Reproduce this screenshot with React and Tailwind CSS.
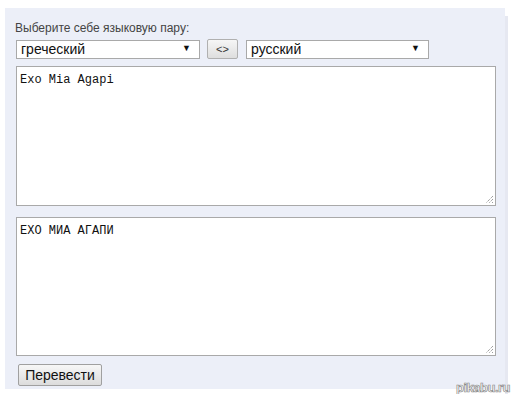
export default function App() {
  const font = { fontFamily: '"Liberation Sans", Arial, sans-serif' };
  const mono = { fontFamily: '"Liberation Mono", "DejaVu Sans Mono", monospace' };
  const Grip = () => (
    <svg className="absolute right-[1px] bottom-[1px]" width="10" height="10" viewBox="0 0 10 10">
      <path d="M9 2 L2 9 M9 5 L5 9 M9 8 L8 9" stroke="#777" strokeWidth="1" strokeDasharray="1 1" />
    </svg>
  );
  const Select = ({ label, w }) => (
    <div className={`relative flex h-[19px] items-center border border-[#a9a9a9] bg-white pl-[4px] text-[14px] text-[#111] ${w}`}>
      <span className="leading-none">{label}</span>
      <span className="absolute right-[8px] top-[3px] text-[9px] leading-none text-[#111]">▼</span>
    </div>
  );
  return (
    <div className="relative h-[394px] w-[512px] bg-white" style={font}>
      <div className="ml-[5px] mt-[8px] flex h-[381px] w-[500px] flex-col bg-[#eceff8] pl-[11px] pt-[13px]">
        <div className="-ml-[1px] text-[12px] leading-[14px] text-[#444]">Выберите себе языковую пару:</div>
        <div className="mt-[4px] flex items-center">
          <Select label="греческий" w="w-[184px]" />
          <div className="ml-[7px] flex h-[20px] w-[31px] items-center justify-center rounded-[2px] border border-[#b0b0b0] bg-gradient-to-b from-[#f6f6f6] to-[#dedede] text-[11px] text-[#333]">&lt;&gt;</div>
          <div className="ml-[8px]"><Select label="русский" w="w-[183px]" /></div>
        </div>
        <div className="relative mt-[7px] h-[140px] w-[480px] border border-[#a9a9a9] bg-white px-[3px] pt-[6px] text-[12px] leading-[14px] text-[#111]" style={mono}>
          Exo Mia Agapi
          <Grip />
        </div>
        <div className="relative mt-[11px] h-[139px] w-[480px] border border-[#a9a9a9] bg-white px-[3px] pt-[6px] text-[12px] leading-[14px] text-[#111]" style={mono}>
          ЕХО МИА АГАПИ
          <Grip />
        </div>
        <div className="ml-[2px] mt-[8px] flex h-[22px] w-[84px] items-center justify-center rounded-[2px] border border-[#a0a0a0] bg-gradient-to-b from-[#f7f7f7] to-[#dcdcdc] text-[14px] text-[#111]">Перевести</div>
      </div>
      <div className="absolute right-[4px] top-[8px] h-[381px] w-[3px] bg-[#e6e8f1]" />
      <div className="absolute bottom-[5px] right-[2px] text-[13px] font-bold tracking-[-0.5px] text-white" style={{ WebkitTextStroke: '0.7px #8a8a8a' }}>pikabu.ru</div>
    </div>
  );
}
